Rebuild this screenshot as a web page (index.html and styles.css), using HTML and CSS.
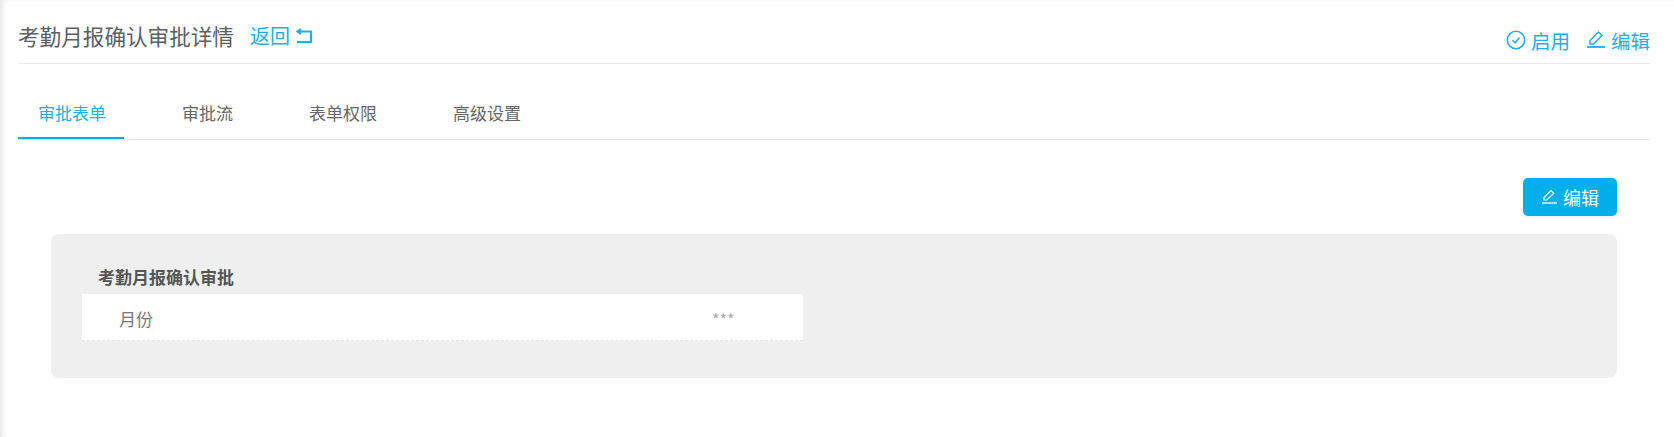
FILE: index.html
```html
<!DOCTYPE html>
<html lang="zh-CN">
<head>
    <meta charset="UTF-8">
    <meta name="viewport" content="width=device-width, initial-scale=1.0">
    <link rel="stylesheet" href="styles.css">
    <title>考勤月报确认审批详情</title>
</head>
<body>
    <div class="page">
        <div class="page-header">
            <div class="header-left">
                <span class="page-title">考勤月报确认审批详情</span>
                <a class="back-link">返回
                    <svg class="back-icon" viewBox="0 0 16 16" width="16" height="16">
                        <path d="M5 1 1.500 3.500 5 6M2 3.500H15V14H1" fill="none" stroke="currentColor" stroke-width="2"/>
                    </svg>
                </a>
            </div>
            <div class="header-actions">
                <a class="action-link">
                    <svg viewBox="0 0 20 20" width="20" height="20">
                        <circle cx="10" cy="10" r="8.700" fill="none" stroke="currentColor" stroke-width="1.500"/>
                        <path d="M6.500 10.300 9 12.800 13.500 7.500" fill="none" stroke="currentColor" stroke-width="1.500"/>
                    </svg>
                    启用
                </a>
                <a class="action-link">
                    <svg viewBox="0 0 20 20" width="20" height="20">
                        <path d="M4 14V10.500L12.500 2 16 5.500 7.500 14Z" fill="none" stroke="currentColor" stroke-width="1.500"/>
                        <path d="M1 17H19" fill="none" stroke="currentColor" stroke-width="1.800"/>
                    </svg>
                    编辑
                </a>
            </div>
        </div>

        <div class="tabs">
            <a class="tab active">审批表单</a>
            <a class="tab">审批流</a>
            <a class="tab">表单权限</a>
            <a class="tab">高级设置</a>
        </div>

        <div class="toolbar">
            <button class="edit-button">
                <svg viewBox="0 0 16 16" width="16" height="16">
                    <path d="M3 11V8.500L10 1.500 12.800 4.300 5.800 11Z" fill="none" stroke="currentColor" stroke-width="1.200"/>
                    <path d="M1 14H16" fill="none" stroke="currentColor" stroke-width="1.300"/>
                </svg>
                编辑
            </button>
        </div>

        <div class="form-card">
            <div class="form-title">考勤月报确认审批</div>
            <div class="form-row">
                <span class="row-label">月份</span>
                <span class="row-value">***</span>
            </div>
        </div>
    </div>
</body>
</html>
```

FILE: styles.css
```css
body {
    margin: 0;
    background: #fff;
    font-family: "Noto Sans CJK SC", "Liberation Sans", sans-serif;
}

.page {
    height: 437px;
    box-sizing: border-box;
    padding: 0 24px 0 18px;
    box-shadow: inset 6px 2px 6px -4px rgba(0,0,0,0.12);
}

/* 顶部标题 */
.page-header {
    display: flex;
    justify-content: space-between;
    height: 63px;
    border-bottom: 1px solid #e9e9e9;
}

.header-left {
    display: flex;
    align-items: center;
    height: 70px;
}

.page-title {
    font-size: 21.600px;
    color: #5a5e66;
}

.back-link {
    display: flex;
    align-items: center;
    gap: 6px;
    margin-left: 16px;
    font-size: 20px;
    color: #1eaee8;
}

.back-icon {
    margin-top: 1px;
}

.header-actions {
    display: flex;
    gap: 16px;
    margin-top: 26px;
    height: 28px;
}

.action-link {
    display: flex;
    align-items: center;
    gap: 5px;
    font-size: 19.500px;
    color: #1eaee8;
}

/* 页签 */
.tabs {
    display: flex;
    gap: 38px;
    height: 75px;
    border-bottom: 1px solid #e5e5e5;
}

.tab {
    padding: 0 18px 0 20px;
    height: 75px;
    box-sizing: border-box;
    line-height: 98px;
    font-size: 17px;
    color: #666;
}

.tab.active {
    color: #1eaee8;
    border-bottom: 2px solid #00aeea;
}

.toolbar {
    display: flex;
    justify-content: flex-end;
    padding: 38px 33px 0 0;
}

.edit-button {
    display: flex;
    align-items: center;
    justify-content: center;
    gap: 6px;
    width: 94px;
    height: 38px;
    padding: 0;
    border: none;
    border-radius: 5px;
    background-color: #00aeea;
    color: #fff;
    font-family: inherit;
    font-size: 18px;
    box-shadow: 0 1px 3px rgba(0,0,0,0.08);
}

.form-card {
    margin: 18px 33px 0 33px;
    height: 144px;
    box-sizing: border-box;
    padding: 25px 0 0 31px;
    background-color: #efefef;
    border-radius: 8px;
}

.form-title {
    height: 35px;
    padding-left: 16px;
    line-height: 35px;
    font-size: 17px;
    font-weight: bold;
    color: #555;
}

.form-row {
    display: flex;
    width: 721px;
    height: 47px;
    box-sizing: border-box;
    background-color: #fff;
    border-bottom: 1px dashed #e4e4e4;
    line-height: 50px;
    font-size: 17px;
}

.row-label {
    width: 593px;
    padding-left: 37px;
    color: #777;
}

.row-value {
    font-size: 16px;
    color: #aaa;
}
```
